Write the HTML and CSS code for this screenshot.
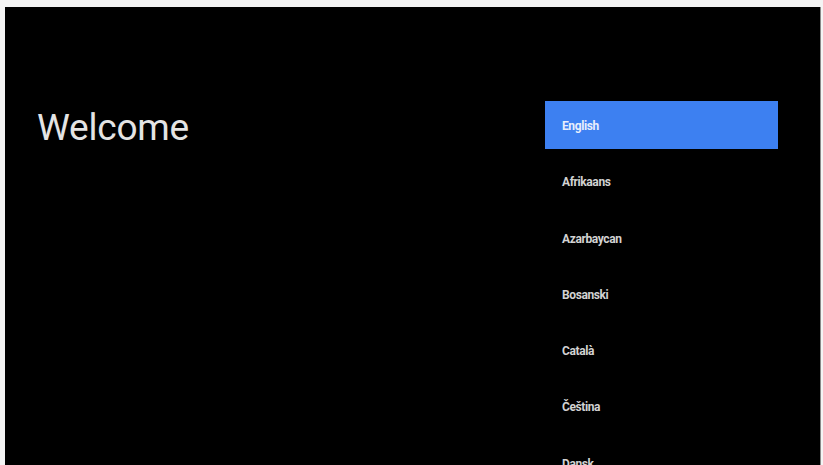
FILE: index.html
```html
<!DOCTYPE html>
<html lang="en">
<head>
    <meta charset="UTF-8">
    <meta name="viewport" content="width=device-width, initial-scale=1.0">
    <title>Welcome</title>
    <link rel="stylesheet" href="styles.css">
</head>
<body>
    <div class="tv-screen">
        <div class="welcome-pane">
            <h1 class="welcome-title">Welcome</h1>
        </div>

        <!-- language picker -->
        <ul class="language-list">
            <li class="language-item selected">English</li>
            <li class="language-item">Afrikaans</li>
            <li class="language-item">Azarbaycan</li>
            <li class="language-item">Bosanski</li>
            <li class="language-item">Català</li>
            <li class="language-item">Čeština</li>
            <li class="language-item">Dansk</li>
        </ul>
    </div>
</body>
</html>
```

FILE: styles.css
```css
:root {
    --frame: #f4f4f4;
    --screen: #000000;
    --title: #e4e4e4;
    --item-text: #d2d2d2;
    --selected: #3d80f1;
}

* {
    margin: 0;
    padding: 0;
    box-sizing: border-box;
}

html,
body {
    height: 100%;
}

body {
    background-color: var(--frame);
    font-family: Roboto, "Liberation Sans", Arial, sans-serif;
    padding: 7px 2px 0 5px;
    overflow: hidden;
}

.tv-screen {
    display: flex;
    height: 100%;
    background-color: var(--screen);
    border-right: 1px solid #8a8a8a;
    overflow: hidden;
}

.welcome-pane {
    flex: 1;
    padding: 97px 0 0 32px;
}

.welcome-title {
    font-size: 37px;
    font-weight: 400;
    line-height: 48px;
    color: var(--title);
    letter-spacing: -0.2px;
}

.language-list {
    list-style: none;
    width: 233px;
    margin-right: 42px;
    padding-top: 94px;
    display: flex;
    flex-direction: column;
    gap: 8.3px;
}

.language-item {
    flex-shrink: 0;
    height: 48px;
    display: flex;
    align-items: center;
    padding: 2px 0 0 17px;
    font-size: 12px;
    font-weight: 700;
    letter-spacing: -0.4px;
    color: var(--item-text);
}

.language-item.selected {
    background-color: var(--selected);
    color: #e8eefc;
}
```
